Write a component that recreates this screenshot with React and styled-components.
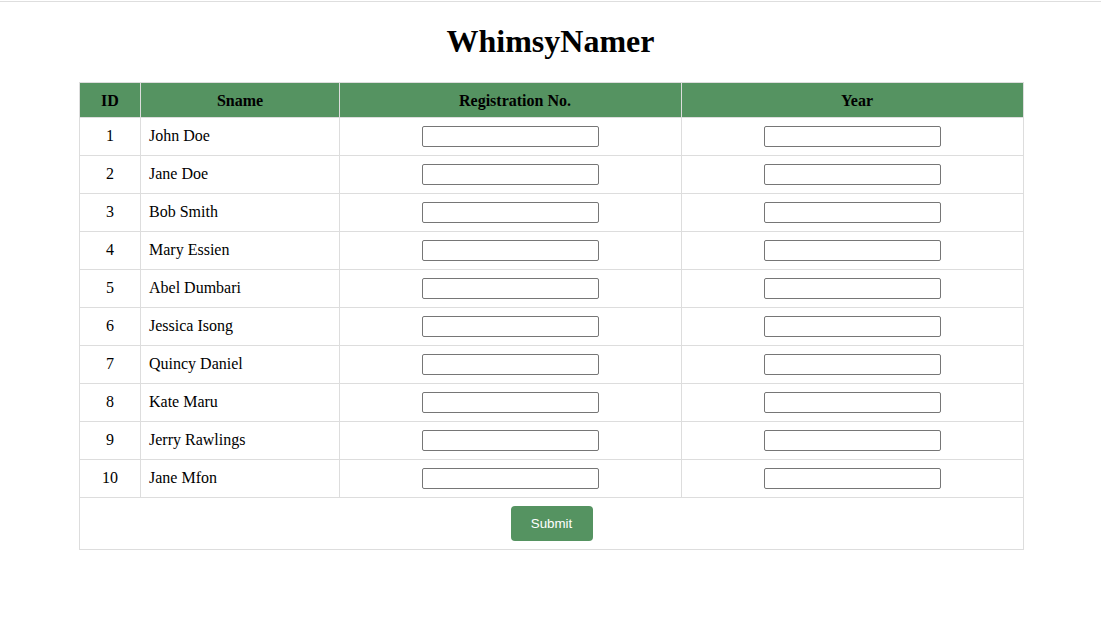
import React from 'react';
import styled, { createGlobalStyle } from 'styled-components';

const GlobalStyle = createGlobalStyle`
  body {
    margin: 0;
    background: #fff;
    font-family: "Liberation Serif", "Times New Roman", serif;
    color: #000;
  }
`;

const Page = styled.div`
  padding-top: 1px;
`;

const TopRule = styled.div`
  height: 1px;
  background: #dedede;
`;

const Title = styled.h1`
  font-size: 32px;
  font-weight: bold;
  text-align: center;
  margin: 21px 0 22px;
  line-height: 37px;
`;

const Table = styled.table`
  width: 944px;
  margin: 0 0 0 79px;
  border-collapse: collapse;
  table-layout: fixed;
  font-size: 16px;
`;

const Th = styled.th`
  background: #559361;
  color: #000;
  font-weight: bold;
  padding: ${p => (p.$wide ? '9px 8px 7px 17px' : '9px 8px 7px')};
  border: 1px solid #dddddd;
  text-align: center;
  line-height: 18px;
`;

const Td = styled.td`
  padding: ${p => (p.$text ? '7px 8px 9px' : '8px')};
  border: 1px solid #dddddd;
  text-align: ${p => (p.$left ? 'left' : 'center')};
  vertical-align: middle;
  line-height: 18px;
`;

const Field = styled.input`
  box-sizing: border-box;
  width: 177px;
  height: 21px;
  padding: 1px 2px;
  border: 1px solid #767676;
  border-radius: 2px;
  font: 13.33px Arial, "Liberation Sans", sans-serif;
  vertical-align: middle;
  background: #fff;
`;

const SubmitButton = styled.button`
  width: 82px;
  background: #559361;
  color: #fff;
  border: none;
  border-radius: 4px;
  padding: 10px 0;
  font: 13.33px "Liberation Sans", Arial, sans-serif;
  line-height: 15px;
  cursor: pointer;
  vertical-align: middle;
`;

const students = [
  'John Doe',
  'Jane Doe',
  'Bob Smith',
  'Mary Essien',
  'Abel Dumbari',
  'Jessica Isong',
  'Quincy Daniel',
  'Kate Maru',
  'Jerry Rawlings',
  'Jane Mfon',
];

export default function App() {
  return (
    <Page>
      <GlobalStyle />
      <TopRule />
      <Title>WhimsyNamer</Title>
      <Table>
        <colgroup>
          <col style={{ width: 61 }} />
          <col style={{ width: 199 }} />
          <col style={{ width: 342 }} />
          <col style={{ width: 342 }} />
        </colgroup>
        <thead>
          <tr>
            <Th>ID</Th>
            <Th>Sname</Th>
            <Th $wide>Registration No.</Th>
            <Th $wide>Year</Th>
          </tr>
        </thead>
        <tbody>
          {students.map((name, i) => (
            <tr key={name + i}>
              <Td $text>{i + 1}</Td>
              <Td $text $left>{name}</Td>
              <Td><Field type="text" /></Td>
              <Td><Field type="text" /></Td>
            </tr>
          ))}
          <tr>
            <Td colSpan={4}>
              <SubmitButton>Submit</SubmitButton>
            </Td>
          </tr>
        </tbody>
      </Table>
    </Page>
  );
}
